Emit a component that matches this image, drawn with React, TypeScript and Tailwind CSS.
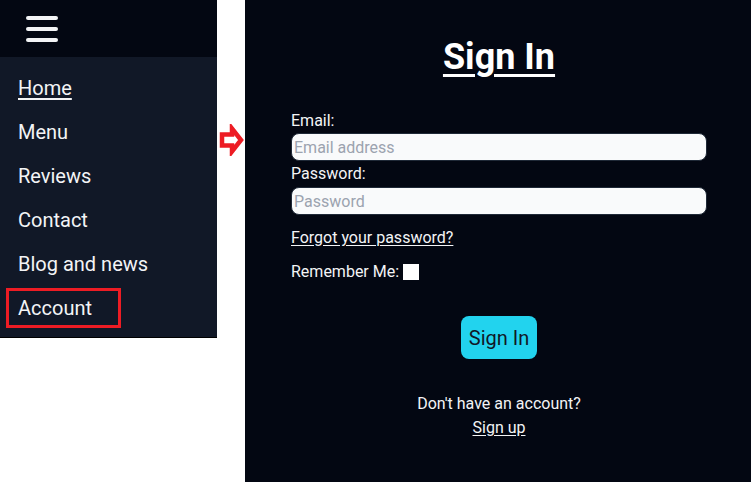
import React from "react";

export default function App() {
  const items = ["Home", "Menu", "Reviews", "Contact", "Blog and news"];
  return (
    <div className="relative flex h-[482px] w-[751px] bg-white" style={{ fontFamily: "Roboto, 'Liberation Sans', sans-serif" }}>
      <div className="w-[217px] self-start">
        <div className="flex h-[57px] items-center bg-[#030712] pl-[26px]">
          <svg width="32" height="30" viewBox="0 0 32 30">
            <rect x="0" y="2" width="32" height="4" rx="2" fill="#f3f4f6" />
            <rect x="0" y="13" width="32" height="4" rx="2" fill="#f3f4f6" />
            <rect x="0" y="24" width="32" height="4" rx="2" fill="#f3f4f6" />
          </svg>
        </div>
        <ul className="border-b border-black bg-[#111827] pt-[9px] pb-[7px] text-[20px] text-[#f3f4f6]">
          {items.map((t, i) => (
            <li key={t} className="flex h-[44px] items-center px-[18px]">
              <span className={i === 0 ? "underline underline-offset-[3px]" : ""}>{t}</span>
            </li>
          ))}
          <li className="my-[2px] ml-[6px] flex h-[40px] w-[115px] items-center border-[3px] border-[#ed1c24] px-[9px]">
            Account
          </li>
        </ul>
      </div>
      <div className="w-[28px]" />
      <div className="flex h-[482px] flex-1 flex-col items-center bg-[#030712] pl-[2px] text-[#f3f4f6]">
        <h1 className="mt-[37px] text-[36px] leading-[40px] font-bold text-white underline underline-offset-[5px] decoration-[3px]">Sign In</h1>
        <form className="mt-[32px] flex w-[416px] flex-col text-[16px]">
          <label className="leading-[24px]">Email:</label>
          <input
            className="h-[28px] rounded-lg border border-[#1f2937] bg-[#f9fafb] px-[2px] text-[16px] text-gray-900 placeholder:text-[#9ca3af] outline-none"
            placeholder="Email address"
          />
          <label className="mt-[1px] leading-[24px]">Password:</label>
          <input
            type="password"
            className="mt-[1px] h-[28px] rounded-lg border border-[#1f2937] bg-[#f9fafb] px-[2px] text-[16px] text-gray-900 placeholder:text-[#9ca3af] outline-none"
            placeholder="Password"
          />
          <a className="mt-[11px] self-start leading-[24px] underline underline-offset-2">Forgot your password?</a>
          <div className="mt-[10px] flex items-center leading-[24px]">
            <span>Remember Me:</span>
            <span className="ml-[4px] inline-block h-[16px] w-[16px] bg-white" />
          </div>
          <button type="button" className="mt-[32px] h-[43px] w-[76px] self-center rounded-lg bg-[#22d3ee] text-[20px] text-[#111827]">
            Sign In
          </button>
          <p className="mt-[33px] text-center leading-[24px]">Don't have an account?</p>
          <a className="self-center leading-[24px] underline underline-offset-2">Sign up</a>
        </form>
      </div>
      <svg className="absolute left-[218px] top-[124px]" width="30" height="32" viewBox="0 0 30 32">
        <polygon points="4,10.5 14,10.5 14,4.5 23,16 14,27.5 14,21.5 4,21.5" fill="white" stroke="#ed1c24" strokeWidth="4.5" strokeLinejoin="miter" />
      </svg>
    </div>
  );
}
